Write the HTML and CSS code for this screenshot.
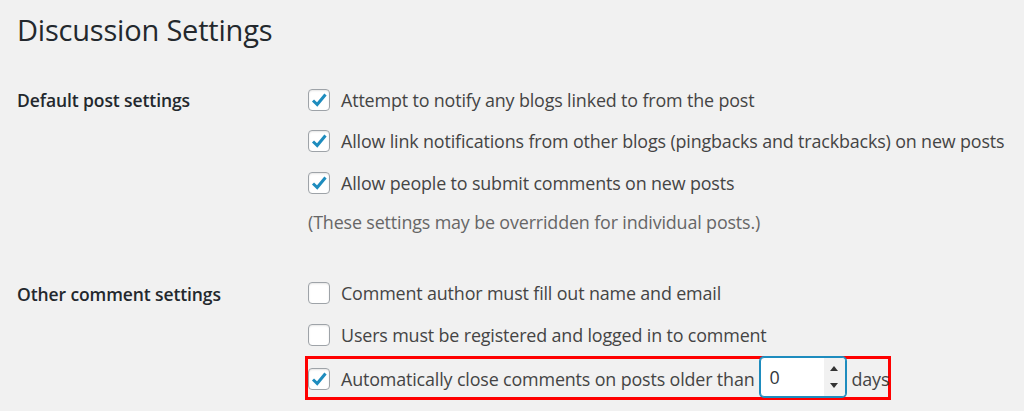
FILE: index.html
```html
<!DOCTYPE html>
<html>
<head>
<meta charset="utf-8">
<link rel="stylesheet" href="styles.css">
</head>
<body>
<div class="wrap">
  <h1 class="title">Discussion Settings</h1>
  <div class="section first">
    <div class="label">Default post settings</div>
    <div class="fields">
      <div class="row"><span class="cb"><svg viewBox="0 0 20 20"><path d="M4 10.5 L8.2 14.5 L16.5 4.5" /></svg></span><span>Attempt to notify any blogs linked to from the post</span></div>
      <div class="row"><span class="cb"><svg viewBox="0 0 20 20"><path d="M4 10.5 L8.2 14.5 L16.5 4.5" /></svg></span><span>Allow link notifications from other blogs (pingbacks and trackbacks) on new posts</span></div>
      <div class="row"><span class="cb"><svg viewBox="0 0 20 20"><path d="M4 10.5 L8.2 14.5 L16.5 4.5" /></svg></span><span>Allow people to submit comments on new posts</span></div>
      <div class="desc">(These settings may be overridden for individual posts.)</div>
    </div>
  </div>
  <div class="section second">
    <div class="label">Other comment settings</div>
    <div class="fields">
      <div class="row"><span class="cb"></span><span>Comment author must fill out name and email</span></div>
      <div class="row"><span class="cb"></span><span>Users must be registered and logged in to comment</span></div>
      <div class="row highlight"><span class="cb"><svg viewBox="0 0 20 20"><path d="M4 10.5 L8.2 14.5 L16.5 4.5" /></svg></span><span>Automatically close comments on posts older than</span>
        <span class="num"><span class="val">0</span><span class="spin"><span class="up"></span><span class="down"></span></span></span>
        <span>days</span></div>
    </div>
  </div>
</div>
</body>
</html>
```
FILE: styles.css
```css
html, body { margin: 0; padding: 0; background: #f1f1f1; }
body { font-family: "Open Sans", "Noto Sans", sans-serif; color: #444; }
.wrap { padding-left: 17px; }
.title { font-weight: 400; font-size: 29px; color: #23282d; margin: 0; padding-top: 10px; height: 50px; line-height: 40px; letter-spacing: -0.2px; }
.section { display: flex; }
.section.first { margin-top: 19px; }
.section.second { margin-top: 32px; }
.label { width: 291px; flex: none; font-weight: 600; font-size: 17.5px; color: #23282d; line-height: 22px; padding-top: 10px; letter-spacing: -0.1px; }
.fields { display: flex; flex-direction: column; }
.row { display: flex; align-items: center; height: 41.5px; font-size: 17.9px; line-height: 22px; letter-spacing: -0.15px; white-space: nowrap; }
.row > span { flex: none; }
.desc { font-size: 17.9px; color: #666; height: 37px; line-height: 37px; letter-spacing: -0.15px; }
.cb { width: 20px; height: 20px; border: 1px solid #9ea3a8; border-radius: 4px; background: #fff; margin-right: 11px; box-sizing: content-box; box-shadow: inset 0 1px 2px rgba(0,0,0,.1); display: flex; }
.cb svg { width: 20px; height: 20px; fill: none; stroke: #1e8cbe; stroke-width: 3; stroke-linecap: butt; stroke-linejoin: miter; }
.highlight { border: 3px solid #f00; margin-left: -3px; box-sizing: border-box; width: 586px; height: 44px; padding-top: 3px; }
.num { display: inline-flex; width: 86px; height: 40px; border: 1px solid #1e8cbe; border-radius: 4px; background: #fff; margin-left: 5px; margin-right: 6px; box-sizing: border-box; position: relative; box-shadow: 0 0 0 1px #1e8cbe; margin-top: -4px; }
.val { padding-left: 9px; line-height: 38px; color: #32373c; }
.spin { position: absolute; right: 0; top: 0; bottom: 0; width: 21px; background: #f1f1f1; border-radius: 0 3px 3px 0; }
.up, .down { position: absolute; left: 6px; width: 0; height: 0; border-left: 4px solid transparent; border-right: 4px solid transparent; }
.up { top: 8px; border-bottom: 5px solid #333; }
.down { bottom: 8px; border-top: 5px solid #333; }
```
